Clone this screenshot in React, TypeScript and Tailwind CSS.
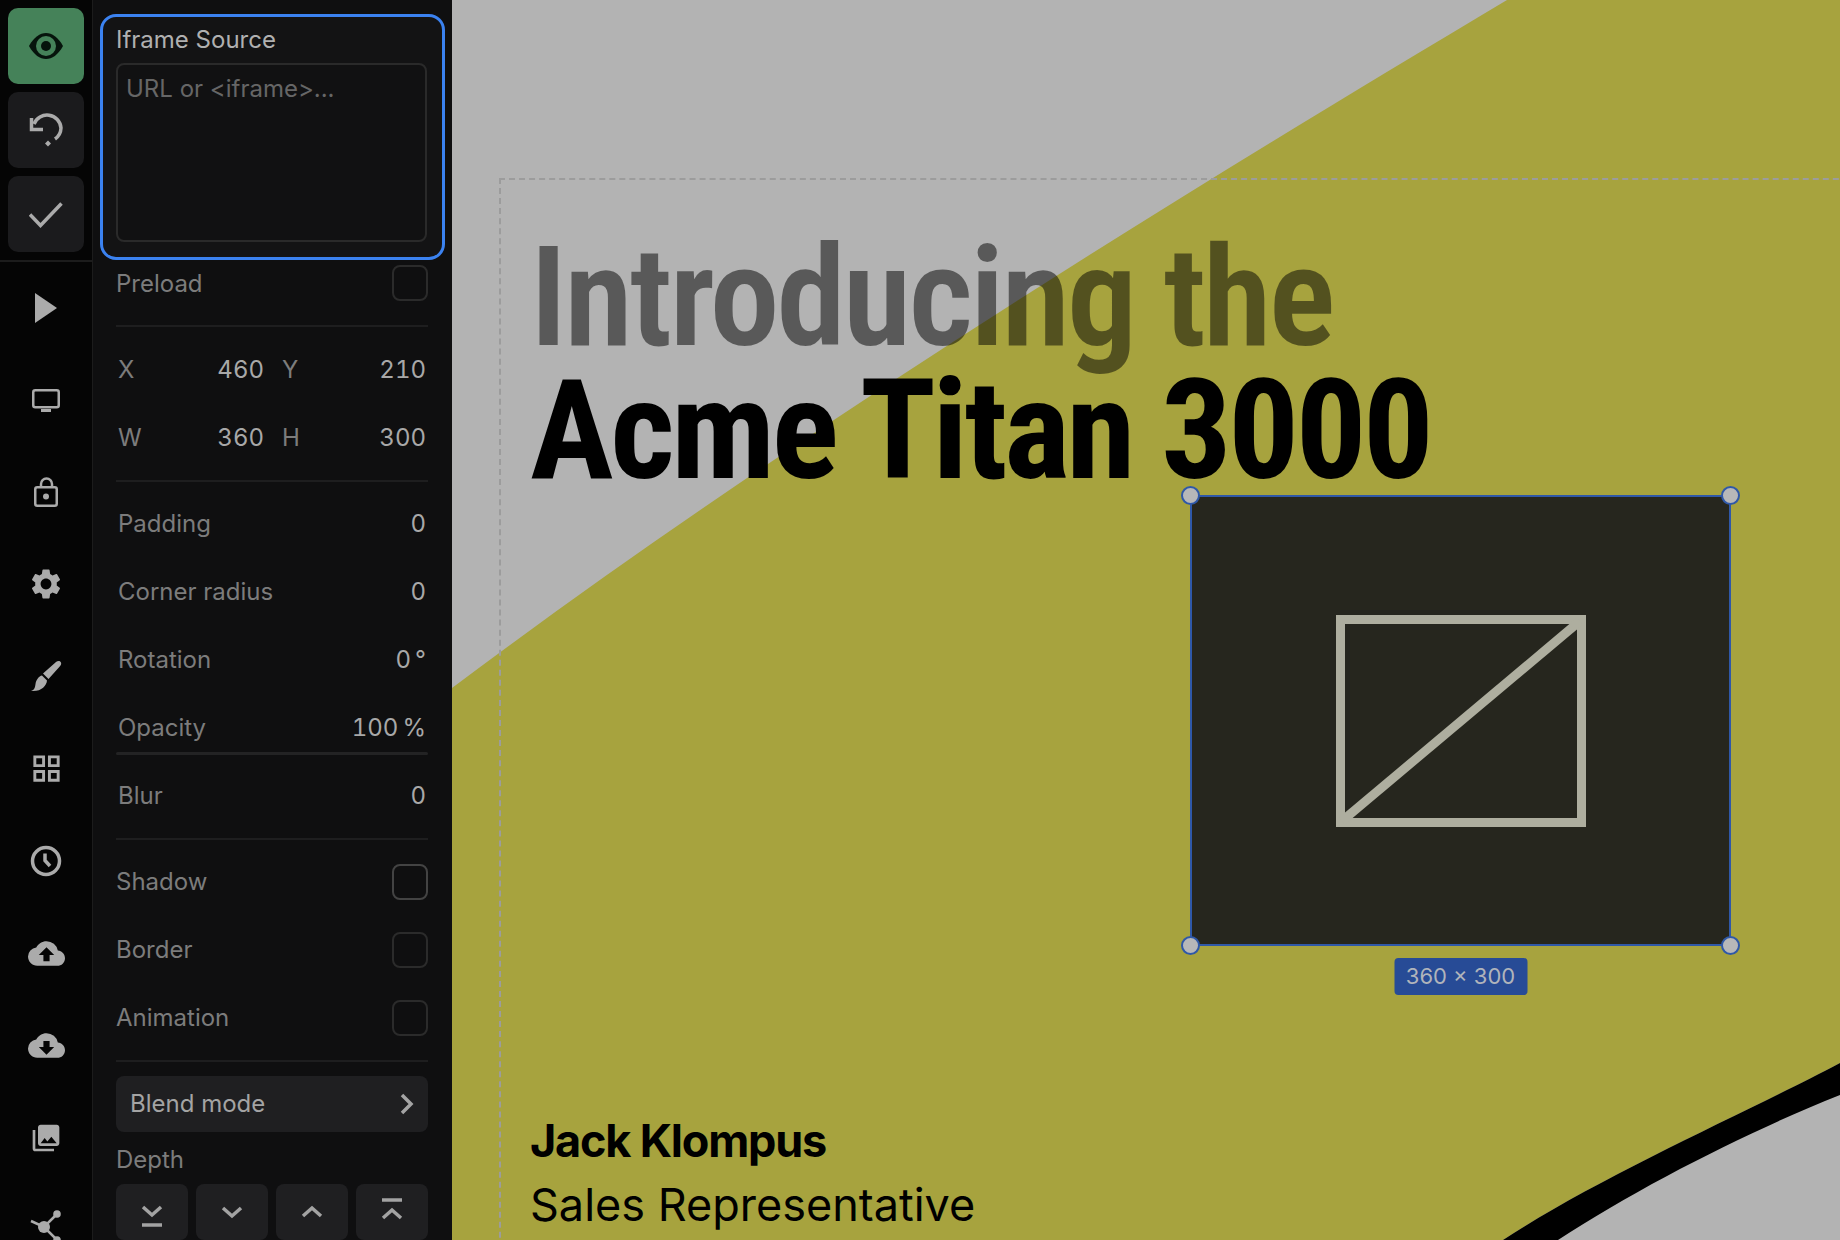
import { MdCloudDownload, MdCloudUpload, MdOutlineGridView, MdPhotoLibrary, MdSettings } from "react-icons/md";
import type { ReactNode } from "react";

const EyeIcon = () => (
  <svg width="36" height="28" viewBox="0 0 36 28">
    <path d="M1 14 C6 5 12 1 18 1 C24 1 30 5 35 14 C30 23 24 27 18 27 C12 27 6 23 1 14 Z" fill="#06140c" />
    <circle cx="18" cy="14" r="10" fill="#458259" />
    <circle cx="18" cy="14" r="5" fill="#06140c" />
  </svg>
);

const UndoDot = () => (
  <svg width="36" height="36" viewBox="0 0 36 36" fill="none" stroke="#ababab" strokeWidth="3.5">
    <path d="M6 12 A14 14 0 0 1 33 16 A14 14 0 0 1 27 27" />
    <path d="M3.5 6 V17.5 H15" />
    <path d="M20 28.5 L23 31.5 L20 34.5 L17 31.5 Z" fill="#ababab" strokeWidth="0" />
  </svg>
);

const CheckIcon = () => (
  <svg className="mt-0.5" width="34" height="26" viewBox="0 0 34 26" fill="none" stroke="#ababab" strokeWidth="3.5">
    <path d="M1 12.5 L11.5 23.5 L32.5 1.5" />
  </svg>
);

const MonitorIcon = () => (
  <svg className="mt-0.5" width="28" height="24" viewBox="0 0 28 24" fill="none" stroke="#ababab" strokeWidth="2.5">
    <rect x="1.25" y="1.25" width="25.5" height="17" rx="2" />
    <path d="M9 20 H19 V23 H9 Z" fill="#ababab" strokeWidth="0" />
  </svg>
);

const LockIcon = () => (
  <svg width="24" height="30" viewBox="0 0 24 30" fill="none" stroke="#ababab" strokeWidth="2.5">
    <rect x="1.25" y="10.25" width="21.5" height="18.5" rx="2" />
    <path d="M7 10 V7 A5.5 5.5 0 0 1 18 7 V9" />
    <circle cx="12" cy="19.5" r="3" fill="#ababab" strokeWidth="0" />
  </svg>
);

const BrushIcon = () => (
  <svg width="32" height="32" viewBox="0 0 32 32" fill="#ababab">
    <path d="M13 13.5 L26 2 C28 0.3 30.5 0.8 31 2.5 C31.6 4.2 30.8 5.5 29.5 6.8 L18.5 19 Z" />
    <path d="M1 31 C4.5 30 5 27.5 5.5 24 C6 20 9 16 12 15.5 L17 20.5 C16.5 26 11 32 1 31 Z" />
  </svg>
);

const ClockIcon = () => (
  <svg className="mt-0.5" width="32" height="32" viewBox="0 0 32 32" fill="none" stroke="#ababab">
    <circle cx="16" cy="16" r="13.5" strokeWidth="3.5" />
    <path d="M15 8.5 V15.5 L20 21" strokeWidth="3.5" />
  </svg>
);

const HubIcon = () => (
  <svg width="32" height="36" viewBox="0 0 32 36" fill="#ababab" stroke="#ababab">
    <path d="M1 11 L14 17 L27 4 M14 17 L27 30" fill="none" strokeWidth="2.5" />
    <circle cx="14" cy="17" r="6" strokeWidth="0" />
    <circle cx="27" cy="4" r="3.8" strokeWidth="0" />
    <circle cx="27" cy="30" r="3.8" strokeWidth="0" />
  </svg>
);

const railIcons: ReactNode[] = [
  <MonitorIcon key="monitor" />,
  <LockIcon key="lock" />,
  <MdSettings key="gear" size={36} />,
  <BrushIcon key="brush" />,
  <MdOutlineGridView key="grid" size={35} />,
  <ClockIcon key="clock" />,
  <MdCloudUpload className="mt-0.5" key="up" size={37} />,
  <MdCloudDownload className="mt-0.5" key="down" size={37} />,
  <MdPhotoLibrary className="mt-1" key="photos" size={32} />,
  <HubIcon key="hub" />,
];

const DepthIcon = ({ up, bar }: { up: boolean; bar: "top" | "bottom" | null }) => (
  <svg width="24" height="36" viewBox="0 0 24 36" fill="none" stroke="#a3a3a3" strokeWidth="3.5">
    <path d={up ? "M3 22 L12 14 L21 22" : "M3 14 L12 22 L21 14"} transform={bar ? (bar === "top" ? "translate(0 2)" : "translate(0 -1)") : ""} />
    {bar === "top" && <path d="M2 6 H22" />}
    {bar === "bottom" && <path d="M2 31 H22" />}
  </svg>
);

const Check = ({ on }: { on?: boolean }) => (
  <div className={`h-9 w-9 rounded-lg border-2 ${on ? "border-[#434343]" : "border-[#2b2b2b]"}`} />
);

const Field = ({ label, value, unit }: { label: string; value: string; unit?: string }) => (
  <div className="flex h-[68px] items-center justify-between px-0.5">
    <span className="text-[#7c7c7c]">{label}</span>
    <span className="tabular-nums text-[#a8a8a8]">
      {value}
      {unit && <span className="ml-1">{unit}</span>}
    </span>
  </div>
);

const Toggle = ({ label, on }: { label: string; on?: boolean }) => (
  <div className="flex h-[68px] items-center justify-between">
    <span className="text-[#7c7c7c]">{label}</span>
    <Check on={on} />
  </div>
);

const Divider = () => <div className="h-0.5 shrink-0 bg-[#1e1e1f]" />;

const XYPair = ({ a, av, b, bv }: { a: string; av: string; b: string; bv: string }) => (
  <div className="flex h-[68px] items-center px-0.5">
    <span className="w-10 text-[#7c7c7c]">{a}</span>
    <span className="w-[106px] text-right tabular-nums text-[#a8a8a8]">{av}</span>
    <span className="ml-[18px] w-10 text-[#7c7c7c]">{b}</span>
    <span className="flex-1 text-right tabular-nums text-[#a8a8a8]">{bv}</span>
  </div>
);

const Handle = ({ pos }: { pos: string }) => (
  <div className={`absolute h-[19px] w-[19px] rounded-full border-2 border-[#2f58a8] bg-[#b7b7b9] ${pos}`} />
);

export default function App() {
  return (
    <div className="flex h-[1240px] w-[1840px] overflow-hidden bg-[#b3b3b3] font-['Inter',sans-serif] text-2xl">
      {/* icon rail */}
      <aside className="flex w-[93px] shrink-0 flex-col overflow-hidden border-r border-[#1c1c1c] bg-[#050505]">
        <div className="flex flex-col gap-2 p-2">
          <button className="flex h-[76px] items-center justify-center rounded-[10px] bg-[#458259]">
            <EyeIcon />
          </button>
          <button className="flex h-[76px] items-center justify-center rounded-[10px] bg-[#1b1b1d]">
            <UndoDot />
          </button>
          <button className="flex h-[76px] items-center justify-center rounded-[10px] bg-[#1b1b1d]">
            <CheckIcon />
          </button>
        </div>
        <div className="h-0.5 shrink-0 bg-[#1c1c1c]" />
        <div className="flex h-[92px] shrink-0 items-center justify-center">
          <svg width="24" height="30" viewBox="0 0 24 30" fill="#ababab">
            <path d="M1 0 L23 15 L1 30 Z" />
          </svg>
        </div>
        {railIcons.map((icon, i) => (
          <div key={i} className="flex h-[92px] shrink-0 items-center justify-center text-[#ababab]">
            {icon}
          </div>
        ))}
      </aside>

      {/* properties panel */}
      <section className="flex w-[359px] shrink-0 flex-col bg-[#0f0f10] pl-[23px] pr-6">
        <div className="-ml-4 -mr-[17px] mt-3.5 flex h-[246px] shrink-0 flex-col rounded-2xl border-[3.5px] border-[#3b82f0] bg-[#131314] pl-[13px] pr-[15px]">
          <div className="flex h-[46px] shrink-0 items-center text-[#b0b0b0]">Iframe Source</div>
          <div className="h-[179px] shrink-0 rounded-lg border-2 border-[#2a2a2a] bg-[#111112] px-2 py-2 text-[#666]">
            URL or &lt;iframe&gt;...
          </div>
        </div>
        <div className="flex h-[46px] shrink-0 items-center justify-between">
          <span className="pt-0.5 text-[#7c7c7c]">Preload</span>
          <Check />
        </div>
        <div className="mt-[19px]">
          <Divider />
        </div>
        <div className="mt-[9px]">
          <XYPair a="X" av="460" b="Y" bv="210" />
          <XYPair a="W" av="360" b="H" bv="300" />
        </div>
        <div className="mt-2">
          <Divider />
        </div>
        <div className="mt-2">
          <Field label="Padding" value="0" />
          <Field label="Corner radius" value="0" />
          <Field label="Rotation" value="0" unit="°" />
          <Field label="Opacity" value="100" unit="%" />
          <div className="-mt-[10px] h-[3px] rounded bg-[#232324]" />
          <div className="mt-[7px]">
            <Field label="Blur" value="0" />
          </div>
        </div>
        <div className="mt-2">
          <Divider />
        </div>
        <div className="mt-2">
          <Toggle label="Shadow" on />
          <Toggle label="Border" />
          <Toggle label="Animation" />
        </div>
        <div className="mt-2">
          <Divider />
        </div>
        <button className="mt-3.5 flex h-14 shrink-0 items-center justify-between rounded-lg bg-[#1f1f21] pl-3.5 pr-3.5 text-[#a4a4a4]">
          Blend mode
          <svg width="14" height="22" viewBox="0 0 14 22" fill="none" stroke="#a4a4a4" strokeWidth="3.5">
            <path d="M2 2 L11 11 L2 20" />
          </svg>
        </button>
        <div className="flex h-[52px] shrink-0 items-center pt-1 text-[#7c7c7c]">Depth</div>
        <div className="grid shrink-0 grid-cols-4 gap-2">
          {[
            { up: false, bar: "bottom" as const },
            { up: false, bar: null },
            { up: true, bar: null },
            { up: true, bar: "top" as const },
          ].map((d, i) => (
            <button key={i} className="flex h-14 items-center justify-center rounded-lg bg-[#1f1f21]">
              <DepthIcon up={d.up} bar={d.bar} />
            </button>
          ))}
        </div>
      </section>

      {/* slide canvas */}
      <main className="relative flex-1 overflow-hidden bg-[#b3b3b3]">
        <svg className="absolute inset-0" width="1388" height="1240" viewBox="0 0 1388 1240">
          <path d="M0 688 C330 440 720 200 1055 0 H1388 V1063 C1300 1110 1150 1175 1051 1240 H0 Z" fill="#a7a33e" />
          <path d="M1388 1063 C1300 1110 1150 1175 1051 1240 H1106 C1190 1185 1300 1130 1388 1095 Z" fill="#000" />
        </svg>
        <div className="absolute left-[47px] top-[178px] h-[1100px] w-[1400px] border-2 border-dashed border-[#9c9c9c]" />

        <div className="absolute left-[78px] top-[231px] whitespace-nowrap font-['Roboto',sans-serif] text-[140px] font-bold leading-[133px] tracking-[-3px] [font-stretch:75%]">
          <div className="font-semibold text-black/50">Introducing the</div>
          <div className="tracking-[-3.4px] text-black">Acme Titan 3000</div>
        </div>

        <div className="absolute left-[78px] top-[1109px] text-[45px] leading-[64px] text-black">
          <div className="font-bold tracking-[-1.2px]">Jack Klompus</div>
          <div>Sales Representative</div>
        </div>

        <div className="absolute left-[738px] top-[495px] flex h-[451px] w-[541px] items-center justify-center border-2 border-[#2f58a8] bg-[#26261e]">
          <svg width="250" height="212" viewBox="0 0 250 212" fill="none" stroke="#aeae9f" strokeWidth="9">
            <rect x="4.5" y="4.5" width="241" height="203" />
            <path d="M6 206 L244 6" />
          </svg>
          <Handle pos="-left-[11px] -top-[11px]" />
          <Handle pos="-right-[11px] -top-[11px]" />
          <Handle pos="-bottom-[11px] -left-[11px]" />
          <Handle pos="-bottom-[11px] -right-[11px]" />
          <div className="absolute left-1/2 top-[461px] flex h-[37px] w-[133px] -translate-x-1/2 items-center justify-center rounded-sm bg-[#274b96] text-[22px] text-[#b0b4bb]">
            360 × 300
          </div>
        </div>
      </main>
    </div>
  );
}
